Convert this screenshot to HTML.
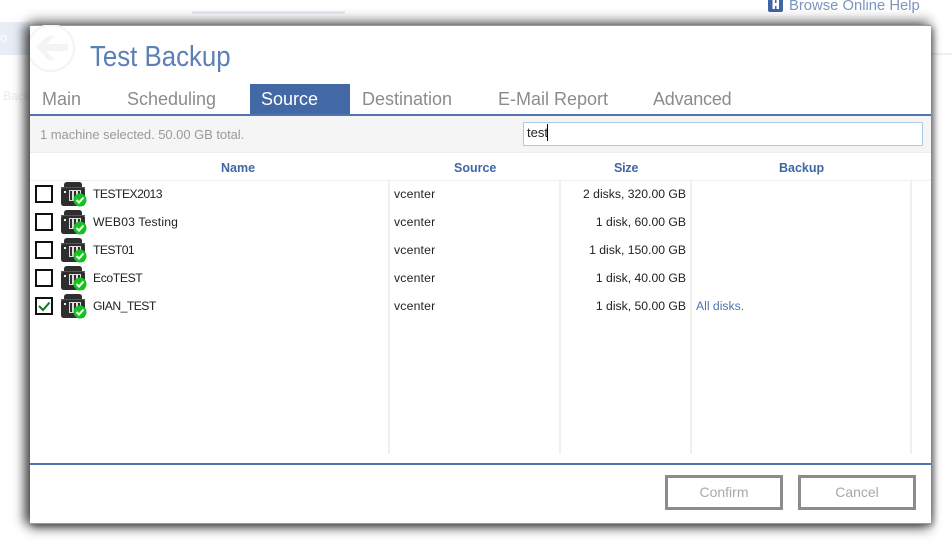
<!DOCTYPE html>
<html><head><meta charset="utf-8">
<style>
html,body{margin:0;padding:0;width:952px;height:558px;overflow:hidden;background:#fff;font-family:"Liberation Sans",sans-serif;}
.a{position:absolute;white-space:nowrap;}
#dlg{position:absolute;left:30px;top:25px;width:901px;height:499px;background:#fff;box-shadow:-7px 0 10px rgba(0,0,0,.5),0 -6px 10px rgba(0,0,0,.3),0 6px 10px rgba(0,0,0,.38),3px 2px 5px rgba(0,0,0,.28);}
.tab{font-size:18px;color:#8c8c8c;top:88px;line-height:22px;}
.h{font-size:12.500px;font-weight:bold;color:#3f67a4;top:160px;line-height:16px;}
.t{font-size:12.200px;color:#222;line-height:16px;}
.cb{position:absolute;left:35px;width:14px;height:14px;border:2px solid #111;background:#fff;}
.v{position:absolute;top:181px;width:2px;height:273px;background:#efefef;}
.btn{position:absolute;top:475px;height:29px;border:3px solid #8c8c8c;background:#fff;color:#a8a8a8;font-size:14px;line-height:29px;text-align:center;box-sizing:content-box;}
.vc{letter-spacing:.2px}
</style></head><body>
<!-- background -->
<div class="a" style="left:192px;top:11px;width:153px;height:3px;background:#e6edf8"></div>
<div class="a" style="left:0;top:22px;width:30px;height:33px;background:#e9edf6"></div>
<div class="a" style="left:0;top:30px;font-size:13px;color:#fff">o</div>
<div class="a" style="left:3px;top:89px;font-size:12px;color:#ececec">Back</div>
<div class="a" style="left:931px;top:53px;width:21px;height:2px;background:#f0f0f4"></div>
<svg class="a" style="left:767px;top:0" width="18" height="13" viewBox="0 0 18 13"><path d="M1 0H16V10Q16 12 14 12H3Q1 12 1 10Z" fill="#3f67a4"/><path d="M5.500 0V9H8V6H9.500V9H12V0H9.500V3H8V0Z" fill="#fff"/></svg>
<div class="a" style="left:789px;top:-3px;font-size:14.800px;line-height:18px;color:#7a96bf">Browse Online Help</div>

<div id="dlg"></div>
<div class="a" style="left:30px;top:25px;width:901px;height:1px;background:#7f9ccb"></div>
<div class="a" style="left:30px;top:523px;width:901px;height:1px;background:#7f9ccb"></div>

<svg class="a" style="left:30px;top:25px" width="50" height="50" viewBox="0 0 50 50"><circle cx="21" cy="23" r="23" fill="none" stroke="#f6f3f5" stroke-width="2"/><path d="M6 22L18 11H25L16 19H38V26H16L25 35H18Z" fill="#f6f3f5"/></svg>

<div class="a" style="left:90px;top:39px;font-size:29px;line-height:36px;color:#5b80b8;transform:scaleX(.89);transform-origin:0 0">Test Backup</div>

<!-- tabs -->
<div class="a" style="left:250px;top:84px;width:100px;height:31px;background:#4268a6"></div>
<div class="a tab" style="left:42px">Main</div>
<div class="a tab" style="left:127px">Scheduling</div>
<div class="a tab" style="left:261px;color:#fff">Source</div>
<div class="a tab" style="left:362px">Destination</div>
<div class="a tab" style="left:498px">E-Mail Report</div>
<div class="a tab" style="left:653px;letter-spacing:-.2px">Advanced</div>
<div class="a" style="left:30px;top:114px;width:901px;height:2px;background:#5275ae"></div>

<!-- toolbar -->
<div class="a" style="left:30px;top:116px;width:901px;height:36px;background:#f5f5f5"></div>
<div class="a" style="left:30px;top:152px;width:901px;height:1px;background:#ececec"></div>
<div class="a" style="left:40px;top:127px;font-size:13px;line-height:16px;letter-spacing:-.05px;color:#9a9a9a">1 machine selected. 50.00 GB total.</div>
<div class="a" style="left:523px;top:122px;width:398px;height:22px;border:1px solid #a9cbe6;background:#fff"></div>
<div class="a" style="left:527px;top:125px;font-size:13px;line-height:16px;color:#222">test</div>
<div class="a" style="left:547px;top:124px;width:1px;height:17px;background:#000"></div>

<!-- header -->
<div class="a h" style="left:221px">Name</div>
<div class="a h" style="left:454px">Source</div>
<div class="a h" style="left:614px;letter-spacing:-.2px">Size</div>
<div class="a h" style="left:779px">Backup</div>
<div class="a" style="left:30px;top:180px;width:901px;height:1px;background:#f3eeee"></div>

<div class="v" style="left:388px"></div>
<div class="v" style="left:559px"></div>
<div class="v" style="left:690px"></div>
<div class="v" style="left:910px"></div>

<svg width="0" height="0" style="position:absolute"><defs>
<g id="srv"><path d="M7 0H19Q22 0 22 3V5Q25 5 25 8V21Q25 24 22 24H4Q1 24 1 21V8Q1 5 4 5V3Q4 0 7 0Z" fill="#2e2e2e"/><rect x="1" y="5" width="24" height="1" fill="#555"/><rect x="4" y="9" width="2" height="2" fill="#eee"/><rect x="9.500" y="8.500" width="3" height="10" fill="none" stroke="#ddd"/><rect x="13.500" y="8.500" width="3" height="10" fill="none" stroke="#ddd"/><rect x="17.500" y="8.500" width="3" height="8" fill="none" stroke="#ddd"/><circle cx="20" cy="18" r="6.500" fill="#12c41d"/><path d="M16.500 18L19 20.500L23.500 15.500" fill="none" stroke="#fff" stroke-width="2"/></g>
</defs></svg>

<!-- rows -->
<div class="cb" style="top:185px"></div>
<svg class="a" style="left:60px;top:182px" width="27" height="26"><use href="#srv"/></svg>
<div class="a t" style="left:93px;top:186px;letter-spacing:-.55px">TESTEX2013</div>
<div class="a t vc" style="left:394px;top:186px">vcenter</div>
<div class="a t" style="right:266px;top:186px">2 disks, 320.00 GB</div>

<div class="cb" style="top:213px"></div>
<svg class="a" style="left:60px;top:210px" width="27" height="26"><use href="#srv"/></svg>
<div class="a t" style="left:93px;top:214px;letter-spacing:.15px">WEB03 Testing</div>
<div class="a t vc" style="left:394px;top:214px">vcenter</div>
<div class="a t" style="right:266px;top:214px">1 disk, 60.00 GB</div>

<div class="cb" style="top:241px"></div>
<svg class="a" style="left:60px;top:238px" width="27" height="26"><use href="#srv"/></svg>
<div class="a t" style="left:93px;top:242px;letter-spacing:-.6px">TEST01</div>
<div class="a t vc" style="left:394px;top:242px">vcenter</div>
<div class="a t" style="right:266px;top:242px">1 disk, 150.00 GB</div>

<div class="cb" style="top:269px"></div>
<svg class="a" style="left:60px;top:266px" width="27" height="26"><use href="#srv"/></svg>
<div class="a t" style="left:93px;top:270px;letter-spacing:-.4px">EcoTEST</div>
<div class="a t vc" style="left:394px;top:270px">vcenter</div>
<div class="a t" style="right:266px;top:270px">1 disk, 40.00 GB</div>

<div class="cb" style="top:297px"></div>
<svg class="a" style="left:35px;top:297px" width="18" height="18"><path d="M4 9L8 13L14.500 5.500" fill="none" stroke="#0b7a1c" stroke-width="2"/></svg>
<svg class="a" style="left:60px;top:294px" width="27" height="26"><use href="#srv"/></svg>
<div class="a t" style="left:93px;top:298px;letter-spacing:-.55px">GIAN_TEST</div>
<div class="a t vc" style="left:394px;top:298px">vcenter</div>
<div class="a t" style="right:266px;top:298px">1 disk, 50.00 GB</div>
<div class="a t" style="left:696px;top:298px;color:#4d74b0">All disks.</div>

<!-- footer -->
<div class="a" style="left:30px;top:463px;width:901px;height:2px;background:#5275ae"></div>
<div class="btn" style="left:665px;width:112px">Confirm</div>
<div class="btn" style="left:798px;width:112px">Cancel</div>
</body></html>
